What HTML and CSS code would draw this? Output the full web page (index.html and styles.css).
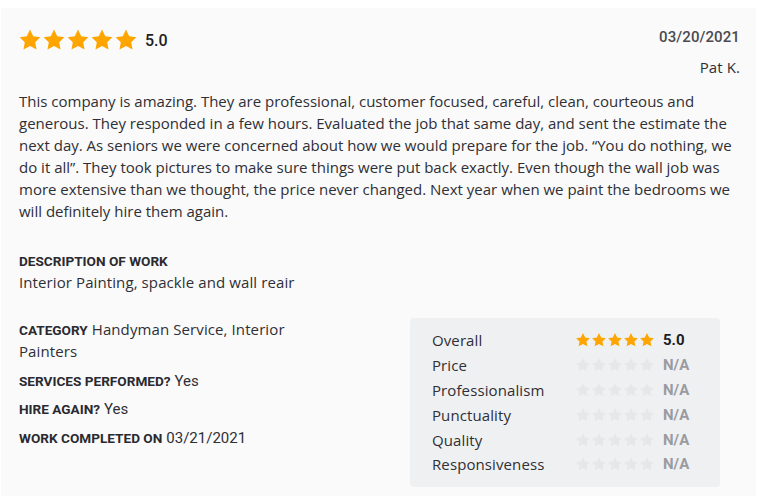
FILE: index.html
```html
<!DOCTYPE html>
<html lang="en">
<head>
<meta charset="utf-8">
<title>Review</title>
<link rel="stylesheet" href="styles.css">
</head>
<body>
<svg width="0" height="0" class="defs" aria-hidden="true">
  <defs>
    <path id="star" d="M12 1.6l3.2 6.6 7.2 1-5.2 5.1 1.3 7.2L12 18.1l-6.5 3.4 1.3-7.2-5.2-5.1 7.2-1z"/>
  </defs>
</svg>
<article class="review">
  <header class="review-head">
    <div class="rating">
      <span class="stars stars-lg">
        <svg viewBox="0 0 24 24"><use href="#star"/></svg>
        <svg viewBox="0 0 24 24"><use href="#star"/></svg>
        <svg viewBox="0 0 24 24"><use href="#star"/></svg>
        <svg viewBox="0 0 24 24"><use href="#star"/></svg>
        <svg viewBox="0 0 24 24"><use href="#star"/></svg>
      </span>
      <span class="score">5.0</span>
    </div>
    <div class="meta">
      <div class="date">03/20/2021</div>
      <div class="author">Pat K.</div>
    </div>
  </header>

  <p class="body-text">This company is amazing. They are professional, customer focused, careful, clean, courteous and generous. They responded in a few hours. Evaluated the job that same day, and sent the estimate the next day. As seniors we were concerned about how we would prepare for the job. “You do nothing, we do it all”. They took pictures to make sure things were put back exactly. Even though the wall job was more extensive than we thought, the price never changed. Next year when we paint the bedrooms we will definitely hire them again.</p>

  <section class="desc">
    <div class="label">DESCRIPTION OF WORK</div>
    <div class="desc-text">Interior Painting, spackle and wall reair</div>
  </section>

  <div class="bottom">
    <div class="details">
      <div class="item"><span class="label">CATEGORY</span> Handyman Service, Interior Painters</div>
      <div class="item"><span class="label">SERVICES PERFORMED?</span> <span class="val">Yes</span></div>
      <div class="item"><span class="label">HIRE AGAIN?</span> <span class="val">Yes</span></div>
      <div class="item"><span class="label">WORK COMPLETED ON</span> <span class="val">03/21/2021</span></div>
    </div>

    <div class="ratings">
      <div class="row">
        <span class="r-label">Overall</span>
        <span class="stars stars-sm">
          <svg viewBox="0 0 24 24"><use href="#star"/></svg>
          <svg viewBox="0 0 24 24"><use href="#star"/></svg>
          <svg viewBox="0 0 24 24"><use href="#star"/></svg>
          <svg viewBox="0 0 24 24"><use href="#star"/></svg>
          <svg viewBox="0 0 24 24"><use href="#star"/></svg>
        </span>
        <span class="r-val">5.0</span>
      </div>
      <div class="row">
        <span class="r-label">Price</span>
        <span class="stars stars-sm empty">
          <svg viewBox="0 0 24 24"><use href="#star"/></svg>
          <svg viewBox="0 0 24 24"><use href="#star"/></svg>
          <svg viewBox="0 0 24 24"><use href="#star"/></svg>
          <svg viewBox="0 0 24 24"><use href="#star"/></svg>
          <svg viewBox="0 0 24 24"><use href="#star"/></svg>
        </span>
        <span class="r-val na">N/A</span>
      </div>
      <div class="row">
        <span class="r-label">Professionalism</span>
        <span class="stars stars-sm empty">
          <svg viewBox="0 0 24 24"><use href="#star"/></svg>
          <svg viewBox="0 0 24 24"><use href="#star"/></svg>
          <svg viewBox="0 0 24 24"><use href="#star"/></svg>
          <svg viewBox="0 0 24 24"><use href="#star"/></svg>
          <svg viewBox="0 0 24 24"><use href="#star"/></svg>
        </span>
        <span class="r-val na">N/A</span>
      </div>
      <div class="row">
        <span class="r-label">Punctuality</span>
        <span class="stars stars-sm empty">
          <svg viewBox="0 0 24 24"><use href="#star"/></svg>
          <svg viewBox="0 0 24 24"><use href="#star"/></svg>
          <svg viewBox="0 0 24 24"><use href="#star"/></svg>
          <svg viewBox="0 0 24 24"><use href="#star"/></svg>
          <svg viewBox="0 0 24 24"><use href="#star"/></svg>
        </span>
        <span class="r-val na">N/A</span>
      </div>
      <div class="row">
        <span class="r-label">Quality</span>
        <span class="stars stars-sm empty">
          <svg viewBox="0 0 24 24"><use href="#star"/></svg>
          <svg viewBox="0 0 24 24"><use href="#star"/></svg>
          <svg viewBox="0 0 24 24"><use href="#star"/></svg>
          <svg viewBox="0 0 24 24"><use href="#star"/></svg>
          <svg viewBox="0 0 24 24"><use href="#star"/></svg>
        </span>
        <span class="r-val na">N/A</span>
      </div>
      <div class="row">
        <span class="r-label">Responsiveness</span>
        <span class="stars stars-sm empty">
          <svg viewBox="0 0 24 24"><use href="#star"/></svg>
          <svg viewBox="0 0 24 24"><use href="#star"/></svg>
          <svg viewBox="0 0 24 24"><use href="#star"/></svg>
          <svg viewBox="0 0 24 24"><use href="#star"/></svg>
          <svg viewBox="0 0 24 24"><use href="#star"/></svg>
        </span>
        <span class="r-val na">N/A</span>
      </div>
    </div>
  </div>
</article>
</body>
</html>
```

FILE: styles.css
```css
html, body {
  margin: 0;
  padding: 0;
  background: #ffffff;
}
body {
  padding: 8px 3px 8px 1px;
  font-family: "Open Sans", "Noto Sans", Arial, sans-serif;
  color: #2f2f35;
  letter-spacing: 0.1px;
}
.defs {
  position: absolute;
  width: 0;
  height: 0;
  overflow: hidden;
}
.review {
  background: #fafafa;
  height: 488px;
  box-sizing: border-box;
  padding: 20px 16px 0 18px;
}
.review-head {
  display: flex;
  justify-content: space-between;
  align-items: flex-start;
}
.rating {
  display: flex;
  align-items: center;
  gap: 7px;
  padding-top: 0;
}
.stars {
  display: inline-flex;
}
.stars svg {
  fill: #ffa500;
  display: block;
}
.stars-lg {
  gap: 0;
  margin-left: -1px;
}
.stars-lg svg {
  width: 24px;
  height: 24px;
}
.score {
  font-family: Roboto, Arial, sans-serif;
  font-weight: 500;
  font-size: 16px;
  letter-spacing: 0;
  color: #1e1e24;
}
.meta {
  text-align: right;
}
.date {
  font-family: Roboto, Arial, sans-serif;
  font-weight: 500;
  font-size: 15px;
  line-height: 18px;
  letter-spacing: 0.1px;
  color: #4a4a50;
}
.author {
  margin-top: 12px;
  font-size: 15px;
  line-height: 18px;
  color: #2f2f35;
}
.body-text {
  margin: 14px 0 0;
  font-size: 15px;
  line-height: 22px;
  letter-spacing: 0;
}
.desc {
  margin-top: 30px;
}
.label {
  font-family: Roboto, Arial, sans-serif;
  font-weight: 700;
  font-size: 13.6px;
  letter-spacing: 0;
  color: #2a2a30;
}
.desc .label {
  line-height: 18px;
}
.desc-text {
  font-size: 15px;
  line-height: 24px;
}
.bottom {
  display: flex;
  align-items: flex-start;
  margin-top: 24px;
}
.details {
  width: 292px;
  display: flex;
  flex-direction: column;
  gap: 6.6px;
}
.item {
  font-size: 15px;
  line-height: 22px;
}
.item .label,
.item .val {
  line-height: 1;
}
.val {
  font-family: Roboto, Arial, sans-serif;
  letter-spacing: 0;
}
.ratings {
  margin-left: auto;
  margin-right: 20px;
  width: 310px;
  box-sizing: border-box;
  background: #eff0f2;
  border-radius: 4px;
  padding: 10px 20px 10px 22px;
}
.row {
  display: flex;
  align-items: center;
  height: 24.8px;
}
.r-label {
  width: 143px;
  font-size: 15px;
}
.stars-sm {
  gap: 0;
}
.stars-sm svg {
  width: 16px;
  height: 16px;
}
.stars-sm.empty svg {
  fill: #e6e7e8;
}
.r-val {
  margin-left: 8px;
  font-family: Roboto, Arial, sans-serif;
  font-weight: 700;
  font-size: 15px;
  letter-spacing: 0;
  color: #1e1e24;
}
.r-val.na {
  color: #9a9ba0;
}
```
